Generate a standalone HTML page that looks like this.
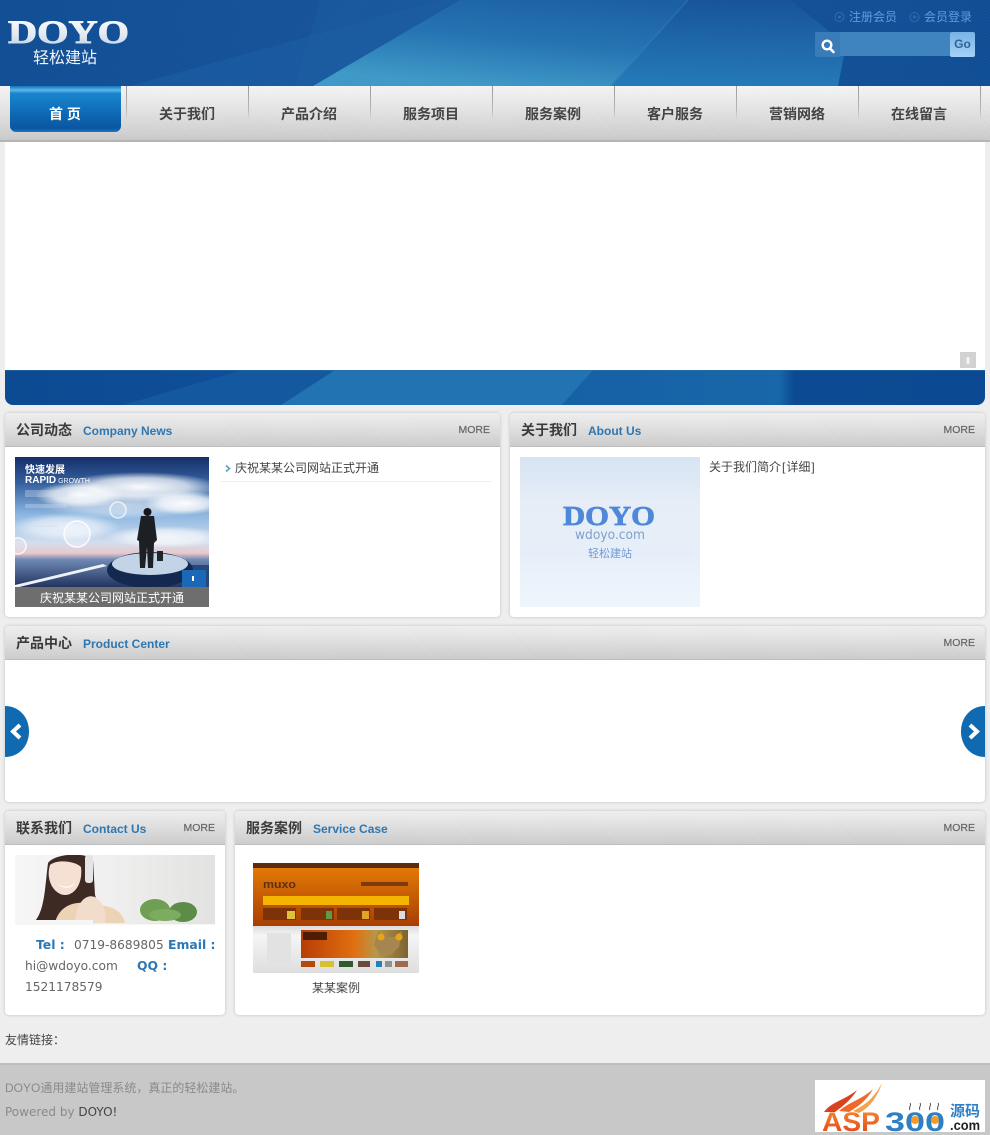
<!DOCTYPE html>
<html lang="zh">
<head>
<meta charset="utf-8">
<title>DOYO 轻松建站</title>
<style>
html,body{margin:0;padding:0}
body{width:990px;height:1135px;position:relative;overflow:hidden;background:#eeeeee;font-family:"Liberation Sans","Noto Sans CJK SC",sans-serif;font-size:12px;color:#444}
.a{position:absolute}
.t{position:absolute;white-space:nowrap;line-height:16px}
.nav{position:absolute;left:0;top:86px;width:990px;height:56px;background:repeating-linear-gradient(45deg,rgba(255,255,255,.10) 0 1px,rgba(0,0,0,.025) 1px 2px),linear-gradient(#f6f6f6 0,#e8e8e8 35%,#d0d0d0 88%,#c8c8c8 100%);border-bottom:2px solid #b4b4b4;box-sizing:border-box}
.sep{position:absolute;top:0;width:1px;height:34px;background:linear-gradient(#9a9a9a,#b8b8b8 70%,rgba(190,190,190,0))}
.item{position:absolute;top:20px;width:122px;text-align:center;font-size:14px;font-weight:bold;color:#444;line-height:16px}
.panel{position:absolute;background:#fff;border-radius:4px;box-shadow:0 0 3px rgba(0,0,0,.2)}
.head{position:absolute;left:0;top:0;right:0;height:33px;border-radius:4px 4px 0 0;border-bottom:1px solid #bdbdbd;background:repeating-linear-gradient(45deg,rgba(255,255,255,.10) 0 1px,rgba(0,0,0,.025) 1px 2px),linear-gradient(#f0f0f0 0,#e8e8e8 25%,#cccccc 100%)}
.cn{position:absolute;left:11px;top:9px;font-size:14px;font-weight:bold;color:#3a3a3a;line-height:16px;white-space:nowrap}
.en{position:absolute;left:78px;top:10px;font-size:12px;font-weight:bold;color:#2f77b1;line-height:16px;white-space:nowrap}
.more{position:absolute;right:10px;top:9px;font-size:10.5px;color:#666;line-height:16px;-webkit-text-stroke:.2px #666}
.ct{position:absolute;white-space:nowrap;line-height:16px;font-family:"DejaVu Sans",sans-serif;font-size:12.2px;color:#666}
.cb{position:absolute;white-space:nowrap;line-height:16px;font-family:"DejaVu Sans",sans-serif;font-size:12.4px;font-weight:bold;color:#2b78b8}
svg{display:block}
svg text{font-family:"Liberation Sans","Noto Sans CJK SC",sans-serif}
</style>
</head>
<body>

<!-- header -->
<svg class="a" style="left:0;top:0" width="990" height="86" viewBox="0 0 990 86">
<defs>
<linearGradient id="hb" x1="0" x2="1" y1="0" y2="0"><stop offset="0" stop-color="#0c4a92"/><stop offset=".3" stop-color="#114f97"/><stop offset=".6" stop-color="#124f97"/><stop offset="1" stop-color="#0b4a92"/></linearGradient>
<linearGradient id="hl" x1=".45" x2=".85" y1="1" y2="0"><stop offset="0" stop-color="#3a97c6"/><stop offset=".5" stop-color="#2070b0"/><stop offset="1" stop-color="#165ba1"/></linearGradient>
<linearGradient id="h2" x1=".7" x2=".75" y1="1" y2="0"><stop offset="0" stop-color="#1f76b6"/><stop offset="1" stop-color="#124f97"/></linearGradient>
<linearGradient id="lg" x1="0" x2="0" y1="0" y2="1"><stop offset="0" stop-color="#fff"/><stop offset=".55" stop-color="#e3e9f3"/><stop offset="1" stop-color="#b9c9de"/></linearGradient>
<pattern id="ht" width="2" height="2" patternUnits="userSpaceOnUse" patternTransform="rotate(45)"><rect width="1" height="2" fill="#fff" opacity=".05"/></pattern>
</defs>
<rect width="990" height="86" fill="url(#hb)"/>
<polygon points="130,86 440,0 520,0 315,86" fill="#15599f" opacity=".7"/>
<polygon points="295,86 320,0 470,0 315,86" fill="#15599f" opacity=".5"/>
<polygon points="313,86 460,0 688,0 610,86" fill="url(#hl)"/>
<polygon points="610,86 688,0 790,0 846,45 838,86" fill="url(#h2)"/>
<polygon points="609,86 687,0 689,0 612,86" fill="#3d92c6" opacity=".3"/>
<rect width="990" height="86" fill="url(#ht)"/>
<text x="8" y="43" font-size="33" font-weight="bold" textLength="121" lengthAdjust="spacingAndGlyphs" fill="url(#lg)" stroke="url(#lg)" stroke-width=".9" style='font-family:"Liberation Serif",serif'>DOYO</text>
<text x="33" y="63" font-size="16" fill="#f2f5fa">轻松建站</text>
<circle cx="839.500" cy="17" r="4.500" fill="none" stroke="#2c6fb0" stroke-width="1"/>
<circle cx="839.500" cy="17" r="1.500" fill="#2c6fb0"/>
<circle cx="914.500" cy="17" r="4.500" fill="none" stroke="#2c6fb0" stroke-width="1"/>
<path d="M912.500 17h4M914.500 15v4" stroke="#2c6fb0" stroke-width="1"/>
<text x="849" y="21" font-size="12" fill="#5f9ddc">注册会员</text>
<text x="924" y="21" font-size="12" fill="#5f9ddc">会员登录</text>
<rect x="815" y="32" width="136" height="24" rx="2" fill="#3f84bf"/>
<rect x="815" y="32" width="25" height="25" rx="2" fill="#3a7cb9"/>
<circle cx="827" cy="45" r="4.300" fill="none" stroke="#fff" stroke-width="2.400"/>
<path d="M830 48.500l3.500 3.500" stroke="#fff" stroke-width="2.600" stroke-linecap="round"/>
</svg>
<div class="a" style="left:950px;top:32px;width:25px;height:25px;border-radius:2px;background:linear-gradient(#79b2e6,#a5d2f6);color:#2c6498;font-weight:bold;font-size:12px;line-height:25px;text-align:center">Go</div>

<!-- nav -->
<div class="nav">
<div class="sep" style="left:126px"></div><div class="sep" style="left:248px"></div><div class="sep" style="left:370px"></div><div class="sep" style="left:492px"></div><div class="sep" style="left:614px"></div><div class="sep" style="left:736px"></div><div class="sep" style="left:858px"></div><div class="sep" style="left:980px"></div>
<div class="a" style="left:10px;top:0;width:111px;height:46px;border-radius:0 0 6px 6px;background:linear-gradient(#0f75bd 0,#5fb6e8 9%,#1a86cf 16%,#0f6cb8 55%,#0a56a1 92%,#1a78c4 100%)"></div>
<div class="item" style="left:4px;color:#fff">首 页</div>
<div class="item" style="left:126px">关于我们</div>
<div class="item" style="left:248px">产品介绍</div>
<div class="item" style="left:370px">服务项目</div>
<div class="item" style="left:492px">服务案例</div>
<div class="item" style="left:614px">客户服务</div>
<div class="item" style="left:736px">营销网络</div>
<div class="item" style="left:858px">在线留言</div>
</div>

<!-- banner -->
<div class="a" style="left:5px;top:142px;width:980px;height:228px;background:#fff"></div>
<svg class="a" style="left:960px;top:352px" width="16" height="16"><rect width="16" height="16" fill="#d2d2d2"/><rect x="6.500" y="5" width="3" height="7" fill="#f4f4f4"/></svg>
<svg class="a" style="left:5px;top:370px" width="980" height="35" viewBox="0 0 980 35">
<defs>
<linearGradient id="bb" x1="0" x2="1" y1="0" y2="0"><stop offset="0" stop-color="#0c4a92"/><stop offset=".3" stop-color="#10509a"/><stop offset=".6" stop-color="#1761a6"/><stop offset=".79" stop-color="#1867a9"/><stop offset=".805" stop-color="#0c4b93"/><stop offset="1" stop-color="#0b4a92"/></linearGradient>
<clipPath id="bc"><path d="M0 0H980V27a8 8 0 0 1-8 8H8a8 8 0 0 1-8-8Z"/></clipPath>
</defs>
<g clip-path="url(#bc)">
<rect width="980" height="35" fill="url(#bb)"/>
<polygon points="118,35 238,0 330,0 276,35" fill="#14599f"/>
<polygon points="276,35 330,0 588,0 557,35" fill="#2173b1"/>
<rect width="980" height="1" fill="#2a6ea8" opacity=".6"/>
</g>
</svg>

<!-- news panel -->
<div class="panel" style="left:5px;top:413px;width:495px;height:204px">
<div class="head"></div><div class="cn">公司动态</div><div class="en">Company News</div><div class="more">MORE</div>
</div>
<svg class="a" style="left:15px;top:457px" width="194" height="150" viewBox="0 0 194 150">
<defs>
<linearGradient id="sky" x1="0" x2="0" y1="0" y2="1"><stop offset="0" stop-color="#162f68"/><stop offset=".2" stop-color="#34609f"/><stop offset=".45" stop-color="#8fb8e2"/><stop offset=".66" stop-color="#d3deee"/><stop offset=".74" stop-color="#e8c9cc"/><stop offset=".79" stop-color="#6f88b4"/><stop offset="1" stop-color="#20345e"/></linearGradient>
<radialGradient id="cl"><stop offset="0" stop-color="#fff" stop-opacity=".97"/><stop offset=".6" stop-color="#fff" stop-opacity=".7"/><stop offset="1" stop-color="#fff" stop-opacity="0"/></radialGradient>
</defs>
<rect width="194" height="130" fill="url(#sky)"/>
<ellipse cx="125" cy="30" rx="80" ry="15" fill="url(#cl)"/>
<ellipse cx="65" cy="38" rx="45" ry="13" fill="url(#cl)"/>
<ellipse cx="170" cy="46" rx="40" ry="12" fill="url(#cl)"/>
<ellipse cx="110" cy="48" rx="85" ry="14" fill="url(#cl)" opacity=".55"/>
<ellipse cx="50" cy="70" rx="55" ry="14" fill="url(#cl)" opacity=".75"/>
<ellipse cx="150" cy="80" rx="60" ry="11" fill="url(#cl)" opacity=".8"/>
<polygon points="0,128 88,107 92,109 0,131" fill="#eef2f8"/>
<polygon points="194,108 194,130 170,130 162,108" fill="#26487f"/>
<ellipse cx="135" cy="113" rx="43" ry="18" fill="#13294f"/>
<ellipse cx="135" cy="107" rx="38" ry="11" fill="#c3d4e6"/>
<g transform="translate(-6,18)">
<path d="M132 41h13l3 24-3 3-1 25h-5l-1-21-2 21h-5l-1-27-2-1Z" fill="#1c1f24"/>
<circle cx="138.500" cy="37" r="4" fill="#15171b"/>
<rect x="148" y="76" width="6" height="10" fill="#20252c"/>
</g>
<circle cx="62" cy="77" r="13" fill="#fff" fill-opacity=".3" stroke="#fff" stroke-width="1.500" opacity=".9"/>
<circle cx="103" cy="53" r="8" fill="#fff" fill-opacity=".2" stroke="#fff" stroke-width="1.500" opacity=".75"/>
<circle cx="3" cy="89" r="8" fill="#fff" fill-opacity=".2" stroke="#fff" stroke-width="1.500" opacity=".85"/>
<rect x="167" y="113" width="24" height="17" fill="#1a68b6"/>
<rect x="177" y="119" width="2" height="5" fill="#fff"/>
<text x="10" y="16" font-size="10" font-weight="bold" fill="#fff">快速发展</text>
<text x="10" y="26" font-size="10" font-weight="bold" fill="#fff">RAPID<tspan font-weight="normal" font-size="7"> GROWTH</tspan></text>
<rect x="10" y="33" width="43" height="7" fill="#d5deeb" opacity=".35"/>
<rect x="10" y="47" width="42" height="4" fill="#d5deeb" opacity=".35"/>
<rect x="10" y="68" width="33" height="2" fill="#d5deeb" opacity=".4"/>
<rect y="130" width="194" height="20" fill="#6e6e6e"/>
<text x="97" y="145" font-size="12" fill="#fff" text-anchor="middle">庆祝某某公司网站正式开通</text>
</svg>
<svg class="a" style="left:224px;top:464px" width="8" height="9"><path d="M2 1.500L5.500 4.500L2 7.500" fill="none" stroke="#5a9ec0" stroke-width="1.600"/></svg>
<div class="t" style="left:235px;top:460px;color:#444">庆祝某某公司网站正式开通</div>
<div class="a" style="left:220px;top:481px;width:272px;height:1px;background:#f0f0f0"></div>

<!-- about panel -->
<div class="panel" style="left:510px;top:413px;width:475px;height:204px">
<div class="head"></div><div class="cn">关于我们</div><div class="en">About Us</div><div class="more">MORE</div>
</div>
<svg class="a" style="left:520px;top:457px" width="180" height="150" viewBox="0 0 180 150">
<defs><linearGradient id="ab" x1="0" x2="0" y1="0" y2="1"><stop offset="0" stop-color="#d6e4f3"/><stop offset=".3" stop-color="#e6edf7"/><stop offset=".65" stop-color="#e6eff9"/><stop offset="1" stop-color="#eff5fc"/></linearGradient></defs>
<rect width="180" height="150" fill="url(#ab)"/>
<text x="43" y="68" font-size="27" font-weight="bold" textLength="92" lengthAdjust="spacingAndGlyphs" fill="#4f88d8" stroke="#4f88d8" stroke-width=".7" style='font-family:"Liberation Serif",serif'>DOYO</text>
<text x="90" y="82" font-size="13" text-anchor="middle" fill="#7f9fc9" style='font-family:"DejaVu Sans",sans-serif' textLength="70" lengthAdjust="spacingAndGlyphs">wdoyo.com</text>
<text x="90" y="100" font-size="11" text-anchor="middle" fill="#6f9ad2">轻松建站</text>
</svg>
<div class="t" style="left:709px;top:459px;color:#444">关于我们简介<span style="padding:0 1px">[</span>详细<span style="padding-left:1px">]</span></div>

<!-- product panel -->
<div class="panel" style="left:5px;top:626px;width:980px;height:176px">
<div class="head"></div><div class="cn">产品中心</div><div class="en">Product Center</div><div class="more">MORE</div>
</div>
<svg class="a" style="left:5px;top:706px" width="25" height="51" viewBox="0 0 25 51">
<path d="M0 0C14 0 24 11 24 25.500S14 51 0 51Z" fill="#0f6ab1"/>
<path d="M15 19L8 25.500L15 32" fill="none" stroke="#fff" stroke-width="4"/>
</svg>
<svg class="a" style="left:960px;top:706px" width="25" height="51" viewBox="0 0 25 51">
<path d="M25 0C11 0 1 11 1 25.500S11 51 25 51Z" fill="#0f6ab1"/>
<path d="M10 19L17 25.500L10 32" fill="none" stroke="#fff" stroke-width="4"/>
</svg>

<!-- contact panel -->
<div class="panel" style="left:5px;top:811px;width:220px;height:204px">
<div class="head"></div><div class="cn">联系我们</div><div class="en">Contact Us</div><div class="more">MORE</div>
</div>
<svg class="a" style="left:15px;top:855px" width="200" height="70" viewBox="0 0 200 70">
<defs><linearGradient id="cb" x1="0" x2="1" y1="0" y2="0"><stop offset="0" stop-color="#f6f6f6"/><stop offset=".45" stop-color="#f0f0f0"/><stop offset="1" stop-color="#e2e2e0"/></linearGradient></defs>
<rect width="200" height="70" fill="url(#cb)"/>
<path d="M18 68C30 58 30 30 33 8C40-2 72-3 78 5L80 40C84 52 88 60 92 68Z" fill="#3d2a24"/>
<path d="M35 10C42 4 60 6 66 12C68 28 60 40 50 40C40 40 30 26 35 10Z" fill="#f6dfd3"/>
<path d="M40 68C44 50 62 44 78 50C100 50 108 58 110 68Z" fill="#ecd3b6"/>
<path d="M42 28C48 33 56 33 60 27C58 34 48 35 42 28Z" fill="#fff"/>
<rect x="70" y="0" width="8" height="28" fill="#e4e4e4" rx="3"/>
<path d="M60 68C60 50 70 38 80 42C90 48 92 60 90 68Z" fill="#f2ddcd"/>
<ellipse cx="140" cy="55" rx="15" ry="11" fill="#6f9f52"/>
<ellipse cx="168" cy="57" rx="14" ry="10" fill="#5d8c49"/>
<ellipse cx="150" cy="60" rx="16" ry="6" fill="#7dab60"/>
<rect x="0" y="65" width="78" height="5" fill="#f6f6f6"/>
<rect x="0" y="69" width="200" height="1" fill="#f6f6f6"/>
</svg>
<div class="cb" style="left:36px;top:937px">Tel :</div>
<div class="ct" style="left:74px;top:937px">0719-8689805</div>
<div class="cb" style="left:168px;top:937px">Email :</div>
<div class="ct" style="left:25px;top:958px">hi@wdoyo.com</div>
<div class="cb" style="left:137px;top:958px">QQ :</div>
<div class="ct" style="left:25px;top:979px">1521178579</div>

<!-- case panel -->
<div class="panel" style="left:235px;top:811px;width:750px;height:204px">
<div class="head"></div><div class="cn">服务案例</div><div class="en">Service Case</div><div class="more">MORE</div>
</div>
<svg class="a" style="left:253px;top:863px" width="166" height="110" viewBox="0 0 166 110">
<defs>
<linearGradient id="or" x1="0" x2="0" y1="0" y2="1"><stop offset="0" stop-color="#e87e06"/><stop offset="1" stop-color="#a83f02"/></linearGradient>
<linearGradient id="gy" x1="0" x2="0" y1="0" y2="1"><stop offset="0" stop-color="#dcdcdc"/><stop offset=".2" stop-color="#f5f5f5"/><stop offset="1" stop-color="#dedede"/></linearGradient>
<linearGradient id="ct" x1="0" x2="1" y1="0" y2="0"><stop offset="0" stop-color="#b83c06"/><stop offset=".5" stop-color="#e07010"/><stop offset=".7" stop-color="#b8964a"/><stop offset="1" stop-color="#7d6230"/></linearGradient>
</defs>
<rect width="166" height="63" fill="url(#or)"/>
<rect width="166" height="5" fill="#5c2c10"/>
<text x="10" y="25" font-size="11" font-weight="bold" fill="#5e2f10" textLength="33" lengthAdjust="spacingAndGlyphs">muxo</text>
<rect x="108" y="19" width="47" height="4" fill="#7d3a0c"/>
<rect x="10" y="33" width="146" height="9" fill="#f4b400"/>
<rect x="10" y="45" width="33" height="12" fill="#7c3309"/><rect x="48" y="45" width="33" height="12" fill="#7c3309"/><rect x="84" y="45" width="33" height="12" fill="#7c3309"/><rect x="121" y="45" width="33" height="12" fill="#7c3309"/>
<rect x="34" y="48" width="8" height="8" fill="#e2c13a"/><rect x="73" y="48" width="6" height="8" fill="#5f9a4a"/><rect x="109" y="48" width="7" height="8" fill="#e2a32a"/><rect x="146" y="48" width="6" height="8" fill="#ddd"/>
<rect y="63" width="166" height="47" fill="url(#gy)"/>
<rect x="48" y="67" width="107" height="28" fill="url(#ct)"/>
<path d="M125 68l8 6 8 0 8-6-3 16-8 8h-10l-7-10Z" fill="#a5864e"/>
<circle cx="128" cy="74" r="3.500" fill="#e5a41a"/><circle cx="146" cy="74" r="3.500" fill="#e5a41a"/>
<rect x="50" y="69" width="24" height="8" fill="#4f1d06"/>
<rect x="14" y="70" width="24" height="30" fill="#e2e2e2"/>
<rect x="48" y="98" width="14" height="6" fill="#b54a10"/><rect x="67" y="98" width="14" height="6" fill="#d8c030"/><rect x="86" y="98" width="14" height="6" fill="#2f5a2a"/><rect x="105" y="98" width="12" height="6" fill="#6a4a3a"/><rect x="123" y="98" width="6" height="6" fill="#2080c0"/><rect x="132" y="98" width="7" height="6" fill="#909090"/><rect x="142" y="98" width="13" height="6" fill="#a06a50"/>
</svg>
<div class="t" style="left:253px;top:980px;width:166px;text-align:center;color:#444">某某案例</div>

<!-- links -->
<div class="t" style="left:5px;top:1032px;color:#444">友情链接：</div>

<!-- footer -->
<div class="a" style="left:0;top:1063px;width:990px;height:72px;background:#c8c8c8;border-top:2px solid #bdbdbd;box-sizing:border-box"></div>
<div class="t" style="left:5px;top:1080px;color:#8a8a8a">DOYO通用建站管理系统，真正的轻松建站。</div>
<div class="t" style='left:5px;top:1104px;color:#8a8a8a;font-family:"DejaVu Sans",sans-serif;font-size:12px'>Powered by <span style="color:#444">DOYO!</span></div>
<svg class="a" style="left:815px;top:1080px" width="170" height="52" viewBox="0 0 170 52">
<defs><linearGradient id="as" x1="0" x2="0" y1="0" y2="1"><stop offset="0" stop-color="#f7902f"/><stop offset="1" stop-color="#e0401c"/></linearGradient></defs>
<rect width="170" height="52" fill="#fff"/>
<path d="M9 32C16 22 30 20 42 10C36 20 28 26 20 32Z" fill="#d9421f"/>
<path d="M24 31C34 22 46 20 58 9C52 20 44 26 34 32Z" fill="#ee6a2a"/>
<path d="M38 31C48 26 58 20 67 3C62 18 54 28 44 33Z" fill="#f6a04a"/>
<text x="7" y="51" font-size="27" font-weight="bold" fill="url(#as)" textLength="58" lengthAdjust="spacingAndGlyphs">ASP</text>
<text x="70" y="51" font-size="27" font-weight="bold" fill="#2f7fc4" textLength="60" lengthAdjust="spacingAndGlyphs">300</text>
<circle cx="100" cy="40" r="4" fill="#f39a2a"/><circle cx="120" cy="40" r="4" fill="#f39a2a"/>
<path d="M95 30c-2-3 2-4 0-7M105 30c-2-3 2-4 0-7M115 30c-2-3 2-4 0-7M123 30c-2-3 2-4 0-7" fill="none" stroke="#555" stroke-width="1"/>
<text x="135" y="36" font-size="15" font-weight="bold" fill="#2f7fc4" textLength="30" lengthAdjust="spacingAndGlyphs">源码</text>
<text x="135" y="50" font-size="14" font-weight="bold" fill="#222" textLength="30" lengthAdjust="spacingAndGlyphs">.com</text>
</svg>

</body>
</html>
